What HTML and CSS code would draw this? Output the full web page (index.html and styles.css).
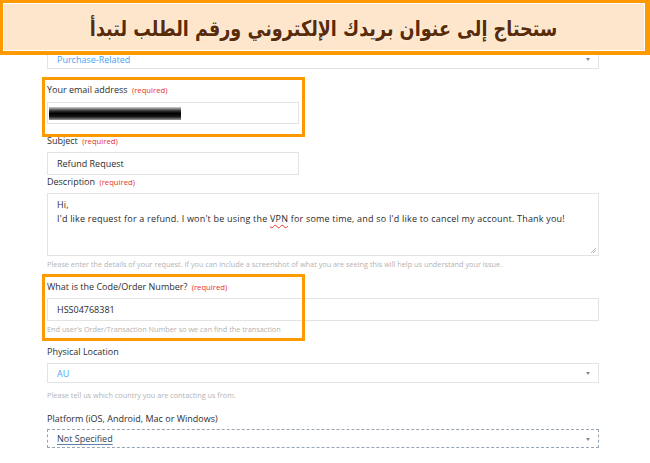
FILE: index.html
```html
<!DOCTYPE html>
<html lang="en">
<head>
<meta charset="utf-8">
<title>Support request</title>
<link rel="stylesheet" href="styles.css">
</head>
<body>
<div class="banner"><span class="banner-text" dir="rtl" lang="ar">ستحتاج إلى عنوان بريدك الإلكتروني ورقم الطلب لتبدأ</span></div>
<div class="form">
  <div class="select select-top"><span class="sel-val blue">Purchase-Related</span></div>

  <div class="group group-email">
    <div class="label">Your email address <span class="req">(required)</span></div>
    <div class="input input-short input-email"><span class="redact"></span></div>
  </div>

  <div class="label label-subject">Subject <span class="req">(required)</span></div>
  <div class="input input-short">Refund Request</div>

  <div class="label label-desc">Description <span class="req">(required)</span></div>
  <div class="textarea">
    <div>Hi,</div>
    <div>I'd like request for a refund. I won't be using the <span class="spell">VPN</span> for some time, and so I'd like to cancel my account. Thank you!</div>
    <span class="grip"></span>
  </div>
  <div class="hint">Please enter the details of your request. If you can include a screenshot of what you are seeing this will help us understand your issue.</div>

  <div class="group group-code">
    <div class="label">What is the Code/Order Number? <span class="req">(required)</span></div>
    <div class="input input-code">HSS04768381</div>
    <div class="hint hint-code">End user's Order/Transaction Number so we can find the transaction</div>
  </div>

  <div class="label label-loc">Physical Location</div>
  <div class="select select-loc"><span class="sel-val blue">AU</span></div>
  <div class="hint hint-loc">Please tell us which country you are contacting us from.</div>

  <div class="label label-plat">Platform (iOS, Android, Mac or Windows)</div>
  <div class="select select-plat"><span class="sel-val plat">Not Specified</span></div>
</div>
</body>
</html>
```
FILE: styles.css
```css
html, body {
  margin: 0;
  padding: 0;
  background: #ffffff;
}
body {
  font-family: "Open Sans", "Liberation Sans", sans-serif;
  color: #333333;
  font-size: 9px;
  height: 463px;
  overflow: hidden;
}

.banner {
  position: relative;
  z-index: 2;
  height: 55px;
  box-sizing: border-box;
  border: 3px solid #ff9900;
  border-right-width: 5px;
  border-bottom-width: 4px;
  background: #fde6cb;
  box-shadow: inset 0 0 0 1px #ffffff;
  display: flex;
  align-items: center;
  justify-content: center;
}
.banner-text {
  display: inline-block;
  font-family: "DejaVu Sans", sans-serif;
  font-weight: bold;
  font-size: 20px;
  color: #5a2b06;
  text-shadow: 0 0 2px #ffffff;
  margin-top: 1px;
  transform: scale(0.88, 1.08);
}

.form {
  width: 552px;
  margin-left: 47px;
  display: flex;
  flex-direction: column;
}

.label {
  height: 12px;
  line-height: 12px;
  font-size: 9px;
  color: #2e2e2e;
  white-space: nowrap;
}
.req {
  color: #e8302c;
  font-size: 7.7px;
  margin-left: 2px;
}

.input {
  box-sizing: border-box;
  height: 23px;
  border: 1px solid #e3e3e3;
  background: #ffffff;
  padding-left: 9px;
  display: flex;
  align-items: center;
  font-size: 9px;
  color: #2b2b2b;
  margin-top: 5px;
}
.input-short {
  width: 252px;
}
.input-email {
  height: 22px;
  margin-top: 6px;
  padding-left: 1px;
}
.redact {
  display: block;
  width: 132px;
  height: 13px;
  background: linear-gradient(to bottom, #d0d0d0 0%, #303030 30%, #000000 50%, #1a1a1a 75%, #9a9a9a 100%);
}

.select {
  position: relative;
  box-sizing: border-box;
  height: 20px;
  border: 1px solid #e3e3e3;
  background: #ffffff;
  padding-left: 9px;
  display: flex;
  align-items: center;
  font-size: 9px;
}
.select::after {
  content: "";
  position: absolute;
  right: 8px;
  top: 50%;
  margin-top: -1px;
  border-left: 2px solid transparent;
  border-right: 2px solid transparent;
  border-top: 3px solid #888888;
}
.blue {
  color: #4da3ef;
}
.select-top {
  margin-top: -6px;
  height: 20px;
}

.group {
  position: relative;
  display: flex;
  flex-direction: column;
}
.group::after {
  content: "";
  position: absolute;
  left: -5px;
  top: 0;
  bottom: 0;
  width: 263px;
  box-sizing: border-box;
  border: 3px solid #ff9900;
  pointer-events: none;
}
.group-email {
  margin-top: 8px;
  padding: 7px 0 13px;
}
.group-code {
  margin-top: 5px;
  padding: 7px 0 7px;
}

.label-subject {
  margin-top: -2px;
}
.label-desc {
  margin-top: 1px;
}

.textarea {
  position: relative;
  box-sizing: border-box;
  height: 63px;
  margin-top: 5px;
  border: 1px solid #e3e3e3;
  padding: 4px 9px 0;
  line-height: 14px;
  font-size: 9px;
  letter-spacing: 0.2px;
  color: #2b2b2b;
  white-space: nowrap;
}
.spell {
  text-decoration: underline wavy #e33;
  text-decoration-thickness: 1px;
  text-underline-offset: 2px;
}
.grip {
  position: absolute;
  right: 2px;
  bottom: 2px;
  width: 5px;
  height: 5px;
  background: linear-gradient(135deg, transparent 0 45%, #b8b8b8 45% 55%, transparent 55% 70%, #b8b8b8 70% 80%, transparent 80%);
}

.hint {
  height: 10px;
  line-height: 10px;
  margin-top: 3px;
  font-size: 7.3px;
  color: #b3b3b3;
  white-space: nowrap;
}

.input-code {
  width: 552px;
}

.label-loc {
  margin-top: 5px;
}
.select-loc {
  margin-top: 5px;
}
.hint-loc {
  margin-top: 7px;
}
.label-plat {
  margin-top: 13px;
}
.select-plat {
  margin-top: 4px;
  height: 19px;
  border: 1px dashed #97a4b3;
}
.plat {
  color: #2d3f55;
  text-decoration: underline;
  text-decoration-color: #5d7fa8;
  text-underline-offset: 2px;
}
```
